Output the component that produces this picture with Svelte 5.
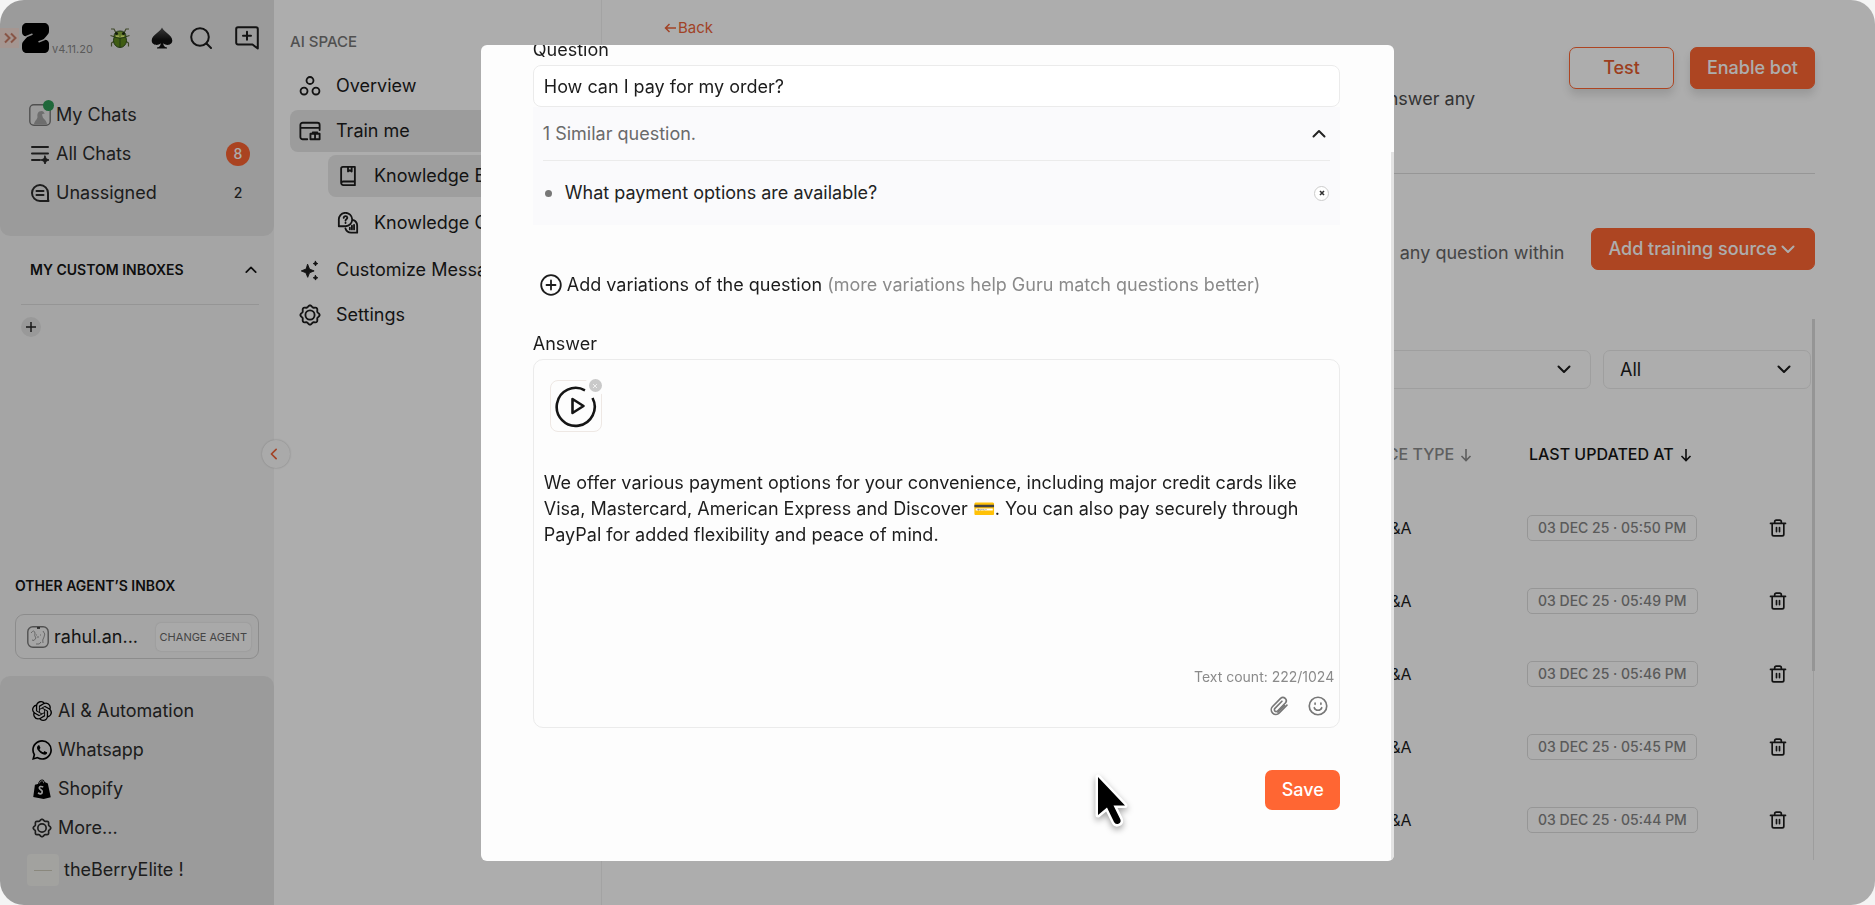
<script lang="ts">
  const updates = ['05:50', '05:49', '05:46', '05:45', '05:44'];
  let question = $state('How can I pay for my order?');
  let answer = $state(
    'We offer various payment options for your convenience, including major credit cards like Visa, Mastercard, American Express and Discover 💳. You can also pay securely through PayPal for added flexibility and peace of mind.'
  );

  // Outline of a gear with rounded teeth
  function gear(teeth: number, radius: number, depth: number) {
    const points: string[] = [];
    for (let i = 0; i < 96; i++) {
      const a = (i / 96) * Math.PI * 2;
      const r = radius + depth * Math.cos(teeth * a);
      points.push(`${(12 + r * Math.cos(a)).toFixed(2)} ${(12 + r * Math.sin(a)).toFixed(2)}`);
    }
    return 'M' + points.join('L') + 'Z';
  }
  const gearPath = gear(8, 9.6, 0.9);
</script>

{#snippet gearIcon()}
  <svg class="ic" viewBox="0 0 24 24"><path d={gearPath} /><circle cx="12" cy="12" r="5" /></svg>
{/snippet}

{#snippet chevron(dir: string)}
  <svg class="chev {dir}" viewBox="0 0 14 14"><path d="M1.500 4.500 7 10l5.500-5.500" /></svg>
{/snippet}

{#snippet trash()}
  <svg class="ic" viewBox="0 0 24 24"><path d="M3 6.500h18M8 6V4.500a2 2 0 0 1 2-2h4a2 2 0 0 1 2 2V6M5 7v12.500a2 2 0 0 0 2 2h10a2 2 0 0 0 2-2V7M10.200 11.500v5M13.800 11.500v5" /></svg>
{/snippet}

<div class="shell">
  <aside class="sidebar">
    <div class="panel top">
      <div class="brand">
        <button class="expand" aria-label="Expand">
          <svg viewBox="0 0 14 12"><path d="m2 1.500 4.500 4.500L2 10.500M8 1.500 12.500 6 8 10.500" /></svg>
        </button>
        <svg class="logo" viewBox="0 0 27 30"><path d="M5 0h17c3 0 5 2 5 5v3c0 2-1 3.500-2.500 5L21 17l2-.3c2.500 0 4 1.800 4 4V25c0 3-2 5-5 5H5c-3 0-5-2-5-5v-3c0-2 1-3.500 2.500-5L6 13l-2 .3C1.500 13.300 0 11.500 0 9V5c0-3 2-5 5-5Z" /><path class="cut" d="M4.500 13.500 10 11.300M22.500 16.600 17 18.800" /></svg>
        <span class="version">v4.11.20</span>
        <button class="bare bug" aria-label="Report a bug">
          <svg viewBox="0 0 22 22"><g fill="none" stroke="#5d6a3c" stroke-width="1.200"><path d="M7 6 5 2 2 2M15 6l2-4 3 0M6 10 1.500 8.500M16 10l4.500-1.500M5.500 14 2.500 16v3.500M16.500 14l3 2v3.500" /></g><ellipse cx="11" cy="13.500" rx="6.500" ry="7" fill="#5f8a1c" stroke="#33511d" /><path d="M5 10q0-6 6-6t6 6q-6 3-12 0Z" fill="#8bb03b" stroke="#33511d" /><circle cx="7.500" cy="6.500" r="1.500" fill="#1d2a10" /><circle cx="14.500" cy="6.500" r="1.500" fill="#1d2a10" /><path d="M7 9.300h3.200M11.800 9.300H15" stroke="#e4f47c" stroke-width="1.600" /><path d="M11 11v9" stroke="#33511d" /></svg>
        </button>
        <button class="bare spade" aria-label="Spade">
          <svg viewBox="0 0 22 22"><defs><linearGradient id="sp" x2="0" y2="1"><stop stop-color="#555" /><stop offset=".6" stop-color="#111" /></linearGradient></defs><path fill="url(#sp)" d="M11 .500c2 4.500 10.300 7.500 10.300 13 0 4.500-6 5.800-9 2.800.1 2.300.8 3.800 3.700 4.300v.9H6v-.9c2.900-.5 3.600-2 3.700-4.300-3 3-9 1.700-9-2.800C.7 8 9 5 11 .500Z" /></svg>
        </button>
        <button class="bare search" aria-label="Search">
          <svg class="ic" viewBox="0 0 22 22"><circle cx="10" cy="10" r="8.800" /><path d="m16.500 16.500 4.500 4.500" /></svg>
        </button>
        <button class="bare" aria-label="New chat">
          <svg class="ic wide" viewBox="0 0 24 24"><path d="M22.800 22.500 17.500 18.500H3a1.800 1.800 0 0 1-1.800-1.800V3A1.800 1.800 0 0 1 3 1.200h18A1.800 1.800 0 0 1 22.800 3ZM12 5.800v8M8 9.800h8" /></svg>
        </button>
      </div>
      <nav class="list" aria-label="Chats">
        <a href="#my">
          <span class="avatar online"><svg viewBox="0 0 22 22"><rect x=".8" y=".8" width="20.400" height="20.400" rx="4" fill="none" stroke="#777" stroke-width="1.400" /><path fill="#a3a3a3" d="M5 20c1-4 3-4 3.500-7-.5-3 .5-6 4-6 2 0 3 1.500 3 3-2-.5-3 .5-2 2 0 3 3.500 3 4.500 8Z" /></svg></span>
          My Chats
        </a>
        <a href="#all">
          <svg class="ic inset" viewBox="0 0 20 20"><path d="M2 3h16M2 9.500h16M2 16h8" /><path class="solid" d="m15 12 1.200 2.800L19 16l-2.800 1.200L15 20l-1.200-2.800L11 16l2.800-1.200Z" /></svg>
          All Chats <b class="badge">8</b>
        </a>
        <a href="#un">
          <svg class="ic inset" viewBox="0 0 20 20"><path d="M18 16.500V10a8 8 0 1 0-8 8h8.500ZM6.500 8h7M6.500 12h7" /></svg>
          Unassigned <span class="count">2</span>
        </a>
      </nav>
    </div>

    <section class="inboxes">
      <h2>MY CUSTOM INBOXES {@render chevron('up small')}</h2>
      <button class="plus" aria-label="Add inbox"><svg viewBox="0 0 10 10"><path d="M5 0v10M0 5h10" /></svg></button>
    </section>
    <button class="collapse" aria-label="Collapse sidebar">{@render chevron('left small')}</button>

    <section class="agent">
      <h2>OTHER AGENT’S INBOX</h2>
      <div class="agent-box">
        <span class="avatar"><svg viewBox="0 0 22 22"><rect x=".8" y=".8" width="20.400" height="20.400" rx="5" fill="none" stroke="#777" stroke-width="1.400" /><path fill="none" stroke="#999" d="M4 7q3-4 4 0-1 3 1 5-2 4-4 2M9 9h1M13 9h1M11 10v2M16 5q3 3 1 6t-1 6M9 18q4 1 5-2" /><path d="M10 2h3" stroke="#222" stroke-width="1.500" /></svg></span>
        <span>rahul.an...</span>
        <button>CHANGE AGENT</button>
      </div>
    </section>

    <nav class="panel bottom list" aria-label="Workspace">
      <a href="#ai"><svg class="fill" viewBox="0 0 24 24"><path d="M22.2819 9.8211a5.9847 5.9847 0 0 0-.5157-4.9108 6.0462 6.0462 0 0 0-6.5098-2.9A6.0651 6.0651 0 0 0 4.9807 4.1818a5.9847 5.9847 0 0 0-3.9977 2.9 6.0462 6.0462 0 0 0 .7427 7.0966 5.98 5.98 0 0 0 .511 4.9107 6.051 6.051 0 0 0 6.5146 2.9001A5.9847 5.9847 0 0 0 13.2599 24a6.0557 6.0557 0 0 0 5.7718-4.2058 5.9894 5.9894 0 0 0 3.9977-2.9001 6.0557 6.0557 0 0 0-.7475-7.0729zm-9.022 12.6081a4.4755 4.4755 0 0 1-2.8764-1.0408l.1419-.0804 4.7783-2.7582a.7948.7948 0 0 0 .3927-.6813v-6.7369l2.02 1.1686a.071.071 0 0 1 .038.0615v5.5826a4.504 4.504 0 0 1-4.4945 4.4944zm-9.6607-4.1254a4.4708 4.4708 0 0 1-.5346-3.0137l.142.0852 4.783 2.7582a.7712.7712 0 0 0 .7806 0l5.8428-3.3685v2.3324a.0804.0804 0 0 1-.0332.0615L9.74 19.9502a4.4992 4.4992 0 0 1-6.1408-1.6464zM2.3408 7.8956a4.485 4.485 0 0 1 2.3655-1.9728V11.6a.7664.7664 0 0 0 .3879.6765l5.8144 3.3543-2.0201 1.1685a.0757.0757 0 0 1-.071 0l-4.8303-2.7865A4.504 4.504 0 0 1 2.3408 7.872zm16.5963 3.8558L13.1038 8.364 15.1192 7.2a.0757.0757 0 0 1 .071 0l4.8303 2.7913a4.4944 4.4944 0 0 1-.6765 8.1042v-5.6772a.79.79 0 0 0-.407-.667zm2.0107-3.0231l-.142-.0852-4.7735-2.7818a.7759.7759 0 0 0-.7854 0L9.409 9.2297V6.8974a.0662.0662 0 0 1 .0284-.0615l4.8303-2.7866a4.4992 4.4992 0 0 1 6.6802 4.66zM8.3065 12.863l-2.02-1.1638a.0804.0804 0 0 1-.038-.0567V6.0742a4.4992 4.4992 0 0 1 7.3757-3.4537l-.142.0805L8.704 5.459a.7948.7948 0 0 0-.3927.6813zm1.0976-2.3654l2.602-1.4998 2.6069 1.4998v2.9994l-2.5974 1.4997-2.6067-1.4997Z" /></svg>AI &amp; Automation</a>
      <a href="#wa"><svg class="fill" viewBox="0 0 24 24"><path d="M17.472 14.382c-.297-.149-1.758-.867-2.03-.967-.273-.099-.471-.148-.67.15-.197.297-.767.966-.94 1.164-.173.199-.347.223-.644.075-.297-.15-1.255-.463-2.39-1.475-.883-.788-1.48-1.761-1.653-2.059-.173-.297-.018-.458.13-.606.134-.133.298-.347.446-.52.149-.174.198-.298.298-.497.099-.198.05-.371-.025-.52-.075-.149-.669-1.612-.916-2.207-.242-.579-.487-.5-.669-.51-.173-.008-.371-.01-.57-.01-.198 0-.52.074-.792.372-.272.297-1.04 1.016-1.04 2.479 0 1.462 1.065 2.875 1.213 3.074.149.198 2.096 3.2 5.077 4.487.709.306 1.262.489 1.694.625.712.227 1.36.195 1.871.118.571-.085 1.758-.719 2.006-1.413.248-.694.248-1.289.173-1.413-.074-.124-.272-.198-.57-.347m-5.421 7.403h-.004a9.87 9.87 0 0 1-5.031-1.378l-.361-.214-3.741.982.998-3.648-.235-.374a9.86 9.86 0 0 1-1.51-5.26c.001-5.45 4.436-9.884 9.888-9.884 2.64 0 5.122 1.03 6.988 2.898a9.825 9.825 0 0 1 2.893 6.994c-.003 5.45-4.437 9.884-9.885 9.884m8.413-18.297A11.815 11.815 0 0 0 12.05 0C5.495 0 .16 5.335.157 11.892c0 2.096.547 4.142 1.588 5.945L.057 24l6.305-1.654a11.882 11.882 0 0 0 5.683 1.448h.005c6.554 0 11.89-5.335 11.893-11.893a11.821 11.821 0 0 0-3.48-8.413Z" /></svg>Whatsapp</a>
      <a href="#shop"><svg class="fill" viewBox="0 0 24 24"><path d="M3.500 7 7 6c1-3.500 3-5.500 5.300-5.500 1.500 0 2.500 1 3 3l3.700 2L22.500 22 14 24 1.500 21.500Z" /><path fill="none" stroke="#e5e5e5" stroke-width="2" d="M13.500 9.500q-4.500-1.500-4.700 1.200c0 2.300 3.700 2.300 3.500 4.800-.2 3-3 2.700-5 1" /><path fill="none" stroke="#e5e5e5" stroke-width=".8" d="M8.500 5.500q1.500-3.500 3.500-3.500t2 3" /></svg>Shopify</a>
      <a href="#more">{@render gearIcon()}More...</a>
      <a href="#brand" class="brandrow"><span class="tile"></span>theBerryElite !</a>
    </nav>
  </aside>

  <nav class="subnav" aria-label="AI space">
    <h2>AI SPACE</h2>
    <a href="#overview"><svg class="ic" viewBox="0 0 24 24"><circle cx="12" cy="6" r="3.800" /><circle cx="5.500" cy="17.500" r="3.800" /><circle cx="18.500" cy="17.500" r="3.800" /></svg>Overview</a>
    <a href="#train" class="active"><svg class="ic" viewBox="0 0 24 24"><path d="M9 21H4a2.500 2.500 0 0 1-2.500-2.500v-13A2.500 2.500 0 0 1 4 3h16a2.500 2.500 0 0 1 2.500 2.500V11M1.500 8.500h21M12.500 15h10v6h-10ZM17.500 15v6M15 15v-1.500h5V15" /></svg>Train me</a>
    <a href="#base" class="child active"><svg class="ic" viewBox="0 0 24 24"><path d="M4.500 19V4a2 2 0 0 1 2-2h13v20H7a2.500 2.500 0 0 1-2.500-2.700A2.500 2.500 0 0 1 7 18h12.500M12 2v5l2-1.300L16 7V2" /></svg>Knowledge Base</a>
    <a href="#gaps" class="child gap"><svg class="ic" viewBox="0 0 24 24"><path d="M2 15.500V8.800A7.300 7.300 0 1 1 9.300 15.500H2ZM18 8.900a6.800 6.800 0 0 1 4 6.400v7.200h-6.500a6.500 6.500 0 0 1-6.300-4.500M7.300 6.500q.2-2 2-2t2 1.800c0 1.500-2 1.500-2 3M9.300 11.500v.6M14 19v-2M16.300 19v-4M18.600 19v-5" /></svg>Knowledge Gaps</a>
    <a href="#customize"><svg class="ic" viewBox="0 0 24 24"><path class="solid" d="m9.500 6 2 5 5 2-5 2-2 5-2-5-5-2 5-2Z" /><path class="solid" d="m18 2.500.8 1.700 1.700.8-1.700.8L18 7.500l-.8-1.700-1.700-.8 1.700-.8ZM18 18l.8 1.700 1.700.8-1.700.8L18 23l-.8-1.700-1.700-.8 1.700-.8Z" /></svg>Customize Messages</a>
    <a href="#settings">{@render gearIcon()}Settings</a>
  </nav>

  <main>
    <a class="back" href="#back"><svg viewBox="0 0 12 12"><path d="M12 6H1.500M5.500 2l-4 4 4 4" /></svg>Back</a>
    <header>
      <p>answer any</p>
      <button class="btn outline">Test</button>
      <button class="btn">Enable bot</button>
    </header>
    <div class="source">
      <p>any question within</p>
      <button class="btn add">Add training source {@render chevron('')}</button>
    </div>
    <div class="scroller">
      <div class="sheet">
        <div class="filters">
          <div class="select grow"><select aria-label="Source"><option></option></select>{@render chevron('')}</div>
          <div class="select"><select aria-label="Status"><option>All</option></select>{@render chevron('')}</div>
        </div>
        <table>
          <thead>
            <tr>
              <td></td>
              <th class="type muted">SOURCE TYPE <svg viewBox="0 0 12 14"><path d="M6 1v11.500M1.500 8 6 12.500 10.500 8" /></svg></th>
              <th class="date">LAST UPDATED AT <svg viewBox="0 0 12 14"><path d="M6 1v11.500M1.500 8 6 12.500 10.500 8" /></svg></th>
              <td class="act"></td>
            </tr>
          </thead>
          <tbody>
            {#each updates as time}
              <tr>
                <td></td>
                <td class="type">Q&amp;A</td>
                <td class="date"><span class="stamp">03 DEC 25 · {time} PM</span></td>
                <td class="act"><button class="bare" aria-label="Delete">{@render trash()}</button></td>
              </tr>
            {/each}
          </tbody>
        </table>
      </div>
      <div class="track"><div class="thumb"></div></div>
    </div>
  </main>
</div>

<div class="backdrop">
  <div class="modal" role="dialog" aria-label="Edit question">
    <div class="body">
      <label class="label" for="q">Question</label>
      <input id="q" bind:value={question} />
      <div class="similar">
        <button class="toggle">1 Similar question. {@render chevron('up')}</button>
        <ul>
          <li><span>What payment options are available?</span><button class="remove" aria-label="Remove"><svg viewBox="0 0 6 6"><path d="m1 1 4 4M5 1 1 5" /></svg></button></li>
        </ul>
      </div>
      <button class="variation">
        <svg class="ic" viewBox="0 0 22 22"><circle cx="11" cy="11" r="9.800" /><path d="M11 6.500v9M6.500 11h9" /></svg>
        <span>Add variations of the question <i>(more variations help Guru match questions better)</i></span>
      </button>
      <label class="label" for="a">Answer</label>
      <div class="editor">
        <div class="media">
          <svg viewBox="0 0 44 44"><path d="M31 6.300A19 19 0 1 0 38.500 14" /><path d="M18.500 15v14l11-7Z" /></svg>
          <button aria-label="Remove media"><svg viewBox="0 0 6 6"><path d="m1 1 4 4M5 1 1 5" /></svg></button>
        </div>
        <textarea id="a" bind:value={answer}></textarea>
        <div class="tally">Text count: 222/1024</div>
        <div class="tools">
          <button class="bare" aria-label="Attach"><svg class="ic" viewBox="0 0 24 24"><path d="m21.500 11-9.200 9.400a5.500 5.500 0 0 1-8-7.800l9.600-9.800a4 4 0 0 1 5.700 5.600L10.300 18a2.200 2.200 0 0 1-3.200-3.100L15.500 6.300" /><path d="m18.500 11.500-7.800 8" /></svg></button>
          <button class="bare" aria-label="Emoji"><svg class="ic" viewBox="0 0 24 24"><circle cx="12" cy="12" r="10.500" /><path d="M7.500 14a4.800 4.800 0 0 0 9 0M8.500 8.500v1.500M15.500 8.500v1.500" /></svg></button>
        </div>
      </div>
      <button class="save">Save</button>
    </div>
    <div class="rail"></div>
  </div>
</div>

<svg class="cursor" viewBox="0 0 42 62"><path d="M8 5v38l9-7.500 7 14.500q1.500 3 4.500 1.700t1.800-4.500L23.500 33.500H35Z" stroke="#fff" stroke-width="5" stroke-linejoin="round" /><path d="M8 5v38l9-7.500 7 14.500q1.500 3 4.500 1.700t1.800-4.500L23.500 33.500H35Z" /></svg>

<style>
  :global(body) { margin: 0; background: #f4f4f4; }
  * { box-sizing: border-box; }
  .shell, .backdrop { font-family: Inter, sans-serif; font-size: 18px; line-height: 22px; color: #1c1c1c; }
  button, input, textarea, select { font: inherit; color: inherit; }
  button { cursor: pointer; border: 0; background: none; padding: 0; }
  a { color: inherit; text-decoration: none; }
  h2, p, ul { margin: 0; padding: 0; }
  svg { display: block; flex: none; }

  .shell { display: flex; height: 100vh; min-height: 860px; background: #fff; border-radius: 24px; overflow: hidden; }
  .ic { width: 22px; height: 22px; fill: none; stroke: currentColor; stroke-width: 2; stroke-linecap: round; stroke-linejoin: round; }
  .ic .solid { fill: currentColor; stroke-width: 1; }
  .chev { width: 14px; height: 14px; fill: none; stroke: currentColor; stroke-width: 2; stroke-linecap: round; stroke-linejoin: round; }
  .chev.small { width: 12px; height: 12px; }
  .up { transform: rotate(180deg); }
  .left { transform: rotate(90deg); }
  .bare { display: grid; place-items: center; }

  .sidebar { position: relative; flex: none; width: 274px; display: flex; flex-direction: column; background: #f4f4f4; }
  .panel { background: #e5e5e5; }
  .top { border-radius: 0 0 10px 10px; padding: 21px 0 24px; }
  .brand { display: flex; align-items: center; height: 34px; }
  .expand { width: 19px; height: 20px; background: #f4ddd6; display: grid; place-items: center; margin-right: 3px; }
  .expand svg { width: 14px; height: 12px; fill: none; stroke: #c97e68; stroke-width: 2; }
  .logo { width: 27px; height: 30px; }
  .logo .cut { fill: none; stroke: #d0d0d0; stroke-width: 1.500; stroke-linecap: round; }
  .version { align-self: flex-end; font-size: 11px; line-height: 12px; color: #858585; margin-left: 3px; flex: 1; }
  .bug svg, .spade svg { width: 22px; height: 22px; }
  .bug { margin-right: 20px; }
  .spade { margin-right: 17px; }
  .search { margin-right: 23px; }
  .brand .bare:last-child { margin-right: 15px; }
  .wide { width: 24px; height: 24px; }

  .list a { display: flex; align-items: center; height: 39px; color: #2c2c2c; }
  .list a > svg { margin-right: 6px; }
  .top.panel .list { padding: 40px 24px 0 29px; }
  .inset { width: 20px; height: 20px; margin-left: 1px; }
  .avatar { position: relative; width: 22px; flex: none; margin-right: 5px; }
  .avatar svg { width: 22px; height: 22px; }
  .online::after { content: ''; position: absolute; right: -3px; top: -4px; width: 11px; height: 11px; border-radius: 50%; background: #2f9a56; }
  .badge { margin-left: auto; width: 24px; height: 24px; border-radius: 50%; background: #fb6332; color: #fff; font-size: 14px; font-weight: 500; text-align: center; line-height: 24px; }
  .count { margin-left: auto; width: 24px; text-align: center; font-size: 14px; font-weight: 500; }

  .inboxes h2, .agent h2 { font-size: 14px; font-weight: 600; line-height: 20px; color: #151515; }
  .inboxes { padding: 24px 15px 0 21px; }
  .inboxes h2 { display: flex; justify-content: space-between; align-items: center; padding: 0 2px 24px 9px; border-bottom: 1px solid #dcdcdc; }
  .plus { margin-top: 12px; width: 20px; height: 20px; border-radius: 50%; background: #e2e2e2; display: grid; place-items: center; }
  .plus svg { width: 10px; height: 10px; stroke: #222; stroke-width: 1.500; }
  .collapse { position: absolute; z-index: 1; right: -16px; top: 50%; margin-top: -13px; width: 28px; height: 28px; border-radius: 50%; background: #fbfbfb; box-shadow: 0 0 2px #bbb; color: #f0643a; display: grid; place-items: center; padding-right: 4px; }
  .agent { margin-top: auto; padding: 0 15px 17px; }
  .agent-box { margin-top: 18px; height: 45px; border: 1px solid #cfcfcf; border-radius: 9px; display: flex; align-items: center; padding: 0 7px 0 11px; }
  .agent-box button { margin-left: auto; font-size: 11px; color: #666; line-height: 28px; padding: 0 4px; background: #fafafa; border-radius: 5px; box-shadow: 0 0 2px #ccc; }
  .bottom { border-radius: 10px 10px 0 0; padding: 15px 0 12px 32px; }
  .bottom .fill { width: 20px; height: 20px; }
  .bottom .ic { width: 20px; height: 20px; }
  .list a.brandrow { height: 46px; margin-left: -5px; }
  .tile { width: 32px; height: 32px; border-radius: 4px; background: #efefeb linear-gradient(#ccc9b8, #ccc9b8) center / 18px 1px no-repeat; margin-right: 5px; }

  .subnav { flex: none; width: 328px; border-right: 1px solid #f0f0f0; padding: 31px 0 0 16px; display: flex; flex-direction: column; color: #1c1c1c; }
  .subnav h2 { font-size: 15px; font-weight: 500; color: #777; margin-bottom: 12px; }
  .subnav a { height: 42px; margin-bottom: 3px; border-radius: 8px 0 0 8px; display: flex; align-items: center; gap: 15px; padding-left: 9px; white-space: nowrap; overflow: hidden; }
  .subnav a.child { margin: 0 0 5px 38px; }
  .subnav .active { background: #e6e6e6; }
  .subnav .active + .active { background: #e9e9e9; }

  main { flex: 1; min-width: 0; display: flex; flex-direction: column; padding: 18px 60px 45px 62px; }
  .back { display: flex; align-items: center; gap: 2px; font-size: 15px; line-height: 20px; color: #ee6339; }
  .back svg { width: 12px; height: 12px; fill: none; stroke: currentColor; stroke-width: 1.500; }
  header { display: flex; justify-content: flex-end; align-items: flex-start; margin-top: 9px; padding-bottom: 84px; border-bottom: 1px solid #dedede; }
  header p { color: #4c4c4c; padding-top: 41px; margin: 0 94px -22px 0; }
  .btn { height: 42px; border-radius: 7px; border: 1px solid #ff6633; background: #ff6633; color: #fff; font-weight: 500; padding: 0 16px; box-shadow: 0 6px 8px rgb(0 0 0 / 12%); }
  .outline { background: #fff; color: #e65c2e; padding: 0 33px; margin-right: 16px; }
  .source { display: flex; justify-content: flex-end; align-items: center; margin-top: 54px; }
  .source p { color: #666; padding-top: 8px; margin-right: 27px; }
  .add { display: flex; align-items: center; gap: 4px; padding: 0 19px 0 16px; box-shadow: none; }
  .scroller { flex: 1; min-height: 0; margin-top: 49px; display: flex; overflow: hidden; }
  .sheet { flex: 1; padding-top: 31px; }
  .track { width: 3px; margin-left: 1px; background: linear-gradient(#e8e8e8, #e8e8e8) center / 1px no-repeat; }
  .thumb { height: 65%; background: #dcdcdc; }
  .filters { display: flex; gap: 12px; }
  .select { position: relative; display: flex; width: 208px; }
  .grow { flex: 1; }
  .select select { appearance: none; width: 100%; height: 39px; border: 1px solid #ebebeb; border-radius: 7px; background: none; padding: 0 16px; }
  .select .chev { position: absolute; right: 20px; top: 12px; pointer-events: none; }
  table { width: 100%; table-layout: fixed; border-collapse: collapse; margin-top: 28px; }
  tr { height: 73px; }
  thead tr { height: 74px; }
  th, td { padding: 0; text-align: left; white-space: nowrap; }
  th { font-size: 16px; font-weight: 500; color: #141414; }
  th svg { display: inline-block; width: 12px; height: 14px; fill: none; stroke: currentColor; stroke-width: 1.600; vertical-align: -2px; margin-left: 2px; }
  th.muted { color: #8c8c8c; }
  th.date { padding-left: 2px; }
  td.type { font-size: 16px; padding-left: 36px; }
  .type { width: 185px; }
  .date { width: 228px; }
  .act { width: 56px; padding-left: 13px; }
  td .ic { width: 20px; height: 20px; }
  .stamp { display: inline-block; border: 1px solid #dedede; border-radius: 5px; font-size: 14px; font-weight: 500; color: #858585; line-height: 24px; padding: 0 10px; }

  .backdrop { position: fixed; z-index: 2; inset: 0; border-radius: 24px; background: rgb(0 0 0 / 32%); display: flex; justify-content: center; padding: 45px 24px 44px; }
  .modal { width: 50%; min-width: 680px; background: #fdfdfd; border-radius: 6px; overflow: hidden; display: flex; }
  .body { flex: 1; min-width: 0; display: flex; flex-direction: column; justify-content: flex-end; padding: 0 51px 51px 52px; }
  .rail { width: 3px; margin-top: 107px; background: #e3e3e3; }
  .label { margin-bottom: 5px; line-height: 20px; }
  .body input { height: 42px; flex: none; border: 1px solid #ebebeb; border-radius: 8px; background: #fff; padding: 0 10px; }
  .similar { background: #fafafc; padding: 0 10px; flex: none; height: 118px; color: #222; }
  .toggle { display: flex; width: 100%; align-items: center; justify-content: space-between; height: 54px; color: #6a6a6a; border-bottom: 1px solid #ebebeb; padding-right: 4px; }
  .toggle .chev { color: #222; }
  ul { list-style: none; }
  li { display: flex; align-items: center; height: 64px; }
  li::before { content: ''; width: 7px; height: 7px; border-radius: 50%; background: #777; margin: 0 13px 0 2px; }
  li span { flex: 1; }
  .remove { width: 15px; height: 15px; border-radius: 50%; border: 1px solid #ccc; display: grid; place-items: center; background: #fff; margin-right: 1px; }
  .remove svg { width: 6px; height: 6px; stroke: #333; stroke-width: 1.600; }
  .variation { display: flex; align-items: center; gap: 5px; margin: 49px 0 38px 7px; text-align: left; white-space: nowrap; }
  .variation .ic { width: 22px; height: 22px; stroke-width: 1.800; }
  .variation i { font-style: normal; color: #8a8a8a; }
  .editor { flex: none; height: 369px; border: 1px solid #ebebeb; border-radius: 10px; padding: 20px 5px 10px 10px; display: flex; flex-direction: column; }
  .media { position: relative; width: 52px; height: 52px; margin-left: 6px; flex: none; border: 1px solid #eee8e4; border-radius: 8px; display: grid; place-items: center; }
  .media > svg { width: 44px; height: 44px; fill: none; stroke: #151515; stroke-width: 2.600; stroke-linejoin: round; }
  .media button { position: absolute; top: -6px; right: -5px; width: 21px; height: 21px; border: 4px solid #fdfdfd; border-radius: 50%; background: #c9c9c9; display: grid; place-items: center; }
  .media button svg { width: 6px; height: 6px; stroke: #eee; }
  textarea { flex: 1; margin: 38px 0 0; padding: 0; border: 0; background: none; resize: none; line-height: 26px; outline: none; overflow: hidden; }
  .tally { align-self: flex-end; font-size: 14px; line-height: 20px; color: #8a8a8a; }
  .tools { display: flex; justify-content: flex-end; gap: 19px; padding: 9px 6px 1px 0; color: #777; }
  .tools .ic { width: 20px; height: 20px; }
  .save { flex: none; align-self: flex-end; margin-top: 42px; width: 75px; height: 40px; border-radius: 7px; background: #ff6633; color: #fff; font-weight: 500; }
  .cursor { position: fixed; z-index: 3; left: 58%; top: 85%; margin: 3px 0 0 2px; width: 42px; height: 62px; overflow: visible; filter: drop-shadow(0 3px 3px rgb(0 0 0 / 35%)); }
</style>
